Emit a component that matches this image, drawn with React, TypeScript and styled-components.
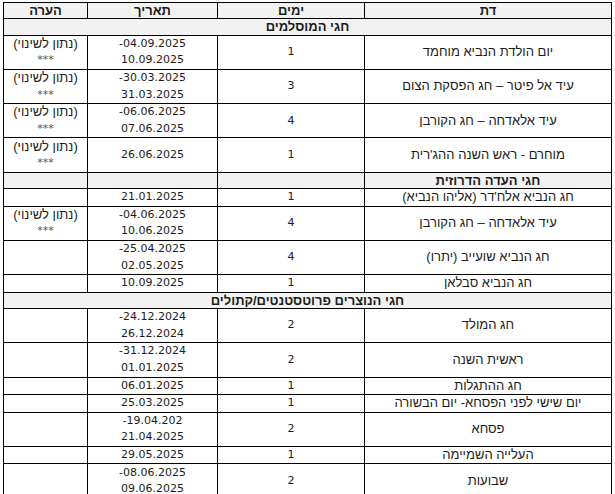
import React, {FC} from 'react'
import styled, {createGlobalStyle} from "styled-components";

type Holiday = {
    name: string
    days: string
    dates: string[]
    note?: boolean
}

type Section = {
    title: string
    split?: boolean
    rows: Holiday[]
}

const sections: Section[] = [
    {
        title: 'חגי המוסלמים',
        rows: [
            {name: 'יום הולדת הנביא מוחמד', days: '1', dates: ['04.09.2025-', '10.09.2025'], note: true},
            {name: 'עיד אל פיטר – חג הפסקת הצום', days: '3', dates: ['30.03.2025-', '31.03.2025'], note: true},
            {name: 'עיד אלאדחה – חג הקורבן', days: '4', dates: ['06.06.2025-', '07.06.2025'], note: true},
            {name: 'מוחרם - ראש השנה ההג\'רית', days: '1', dates: ['26.06.2025'], note: true},
        ]
    },
    {
        title: 'חגי העדה הדרוזית',
        split: true,
        rows: [
            {name: 'חג הנביא אלח\'דר (אליהו הנביא)', days: '1', dates: ['21.01.2025']},
            {name: 'עיד אלאדחה – חג הקורבן', days: '4', dates: ['04.06.2025-', '10.06.2025'], note: true},
            {name: 'חג הנביא שועייב (יתרו)', days: '4', dates: ['25.04.2025-', '02.05.2025']},
            {name: 'חג הנביא סבלאן', days: '1', dates: ['10.09.2025']},
        ]
    },
    {
        title: 'חגי הנוצרים פרוטסטנטים/קתולים',
        rows: [
            {name: 'חג המולד', days: '2', dates: ['24.12.2024-', '26.12.2024']},
            {name: 'ראשית השנה', days: '2', dates: ['31.12.2024-', '01.01.2025']},
            {name: 'חג ההתגלות', days: '1', dates: ['06.01.2025']},
            {name: 'יום שישי לפני הפסחא- יום הבשורה', days: '1', dates: ['25.03.2025']},
            {name: 'פסחא', days: '2', dates: ['19.04.202-', '21.04.2025']},
            {name: 'העלייה השמיימה', days: '1', dates: ['29.05.2025']},
            {name: 'שבועות', days: '2', dates: ['08.06.2025-', '09.06.2025']},
        ]
    },
];

const App: FC = () => {
    return (
        <>
            <GlobalStyle/>
            <Page>
                <Table dir="rtl">
                    <colgroup>
                        <col style={{width: 247}}/>
                        <col style={{width: 147}}/>
                        <col style={{width: 130}}/>
                        <col style={{width: 84}}/>
                    </colgroup>
                    <thead>
                    <Row>
                        <HeadCell>דת</HeadCell>
                        <HeadCell>ימים</HeadCell>
                        <HeadCell>תאריך</HeadCell>
                        <HeadCell>הערה</HeadCell>
                    </Row>
                    </thead>
                    <tbody>
                    {sections.map(section => (
                        <React.Fragment key={section.title}>
                            {section.split ? (
                                <Row>
                                    <SectionCell>{section.title}</SectionCell>
                                    <SectionCell/>
                                    <SectionCell/>
                                    <SectionCell/>
                                </Row>
                            ) : (
                                <Row>
                                    <SectionCell colSpan={4}>{section.title}</SectionCell>
                                </Row>
                            )}
                            {section.rows.map((h, i) => {
                                const tall = h.dates.length > 1 || !!h.note
                                return (
                                    <Row key={i} $tall={tall}>
                                        <NameCell>{h.name}</NameCell>
                                        <NumCell>{h.days}</NumCell>
                                        <NumCell>
                                            {h.dates.map(d => <Line key={d}>{d}</Line>)}
                                        </NumCell>
                                        <NoteCell>
                                            {h.note && (
                                                <>
                                                    <Line>(נתון לשינוי)</Line>
                                                    <Stars>***</Stars>
                                                </>
                                            )}
                                        </NoteCell>
                                    </Row>
                                )
                            })}
                        </React.Fragment>
                    ))}
                    </tbody>
                </Table>
            </Page>
        </>
    )
};

export default App;


const GlobalStyle = createGlobalStyle`
  body {
    margin: 0;
    background: #ffffff;
  }
`;

const Page = styled.div`
  padding: 2px 4px 0 3px;
`;

const Table = styled.table`
  width: 609px;
  table-layout: fixed;
  border-collapse: collapse;
  color: #1c1c1c;
  font-family: Tahoma, "Liberation Sans", sans-serif;
  font-size: 13px;
`;

const Row = styled.tr<{ $tall?: boolean }>`
  height: ${p => p.$tall ? 34.3 : 16.3}px;
`;

const Cell = styled.td`
  border: 1px solid #000;
  padding: 0 2px;
  text-align: center;
  vertical-align: middle;
  line-height: 16.5px;
  white-space: nowrap;
`;

const HeadCell = styled.th`
  border: 1px solid #000;
  padding: 0 2px;
  background: #f2f2f2;
  font-weight: bold;
  text-align: center;
  line-height: 15px;
`;

const SectionCell = styled(Cell)`
  background: #f2f2f2;
  font-weight: bold;
  line-height: 15px;
`;

const NameCell = styled(Cell)``;

const NumCell = styled(Cell)`
  font-family: "DejaVu Sans", Verdana, sans-serif;
  font-size: 11px;
`;

const NoteCell = styled(Cell)``;

const Line = styled.div``;

const Stars = styled.div`
  color: #555;
  font-family: "DejaVu Sans", Verdana, sans-serif;
  font-size: 11px;
`;
